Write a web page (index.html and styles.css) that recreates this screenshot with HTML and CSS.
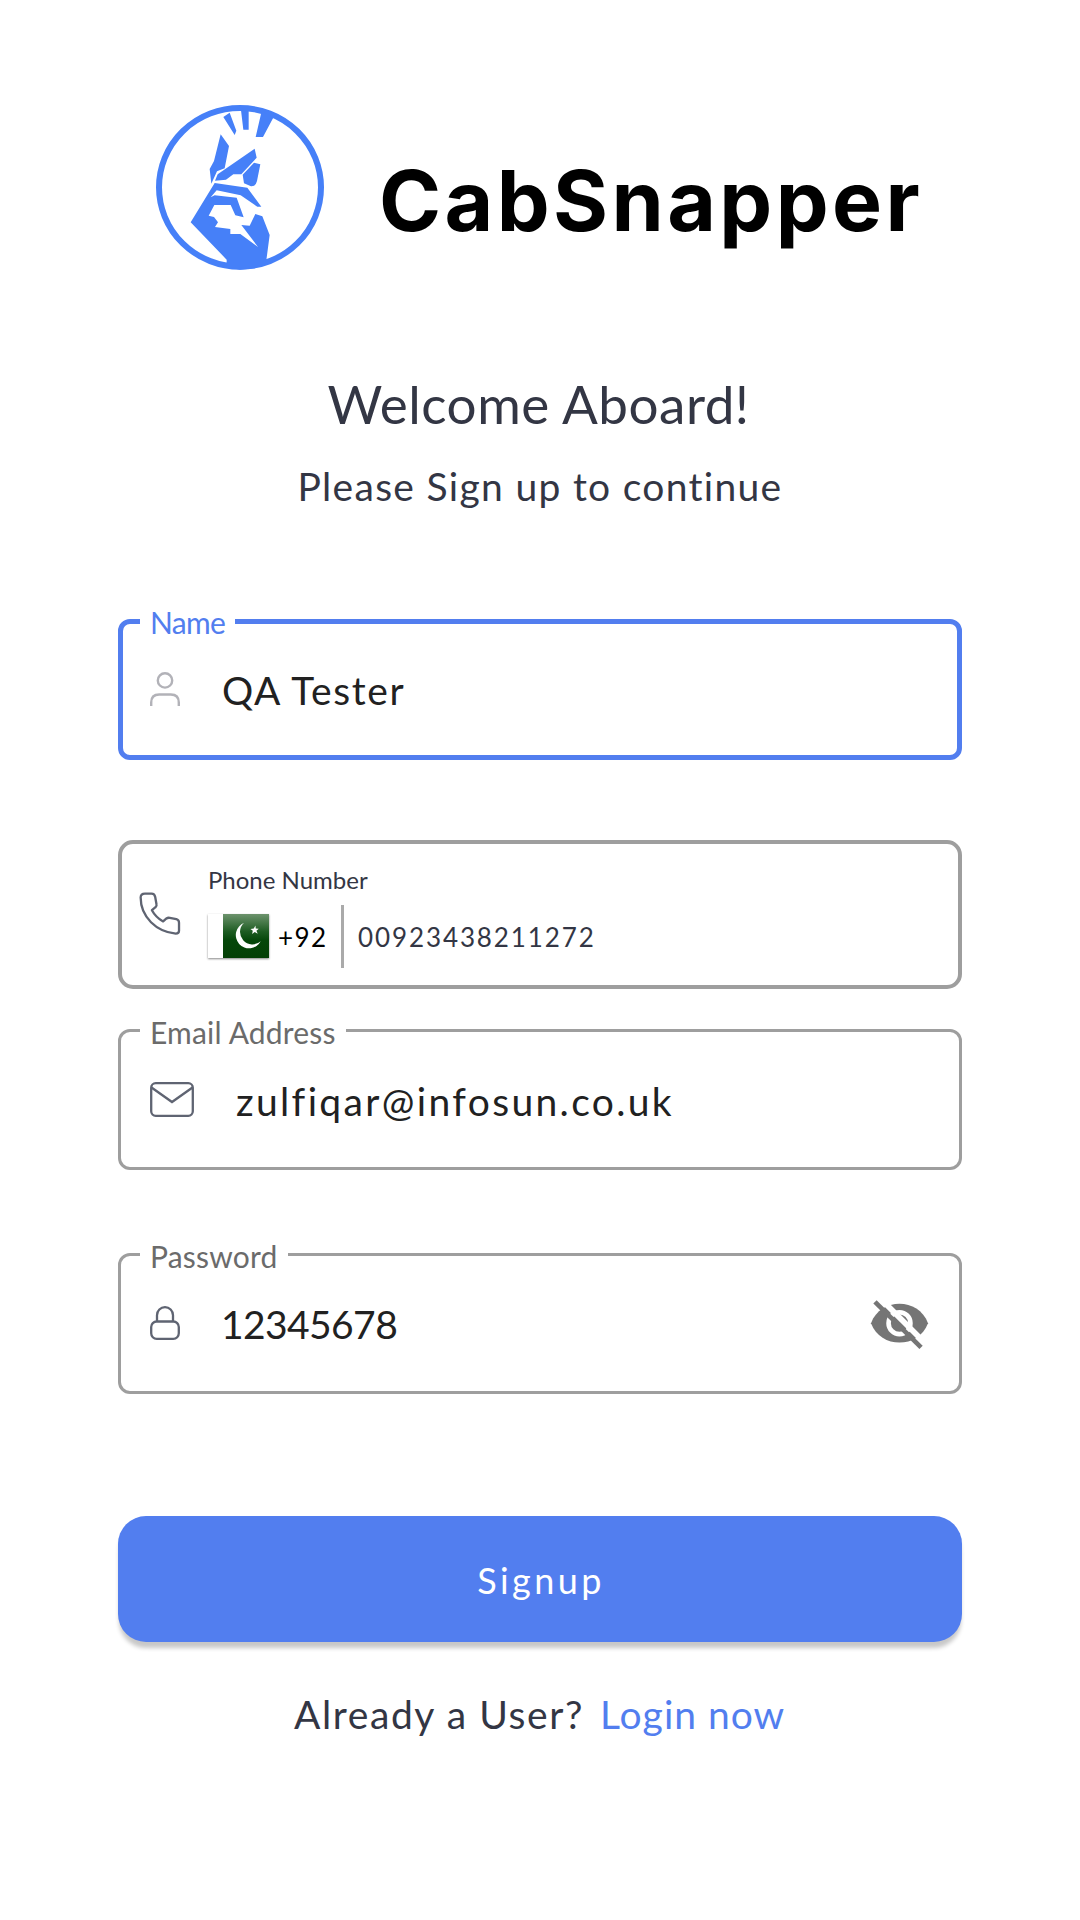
FILE: index.html
```html
<!DOCTYPE html>
<html lang="en">
<head>
<meta charset="utf-8">
<title>CabSnapper</title>
<link rel="stylesheet" href="styles.css">
</head>
<body>
<main class="screen">
  <header class="brand">
    <svg class="brand-mark" viewBox="0 0 570 555" fill="#4680f8">
      <ellipse cx="285" cy="277" rx="243" ry="238" fill="none" stroke="#4680f8" stroke-width="18"/>
      <path d="M235 66 254 53 274 107 269 120ZM288 46H311V104H295ZM350 48 386 66 354 126H332Z"/>
      <path d="M227 118 252 153 239 220 216 229 199 266 194 222 207 198ZM329 161 335 188 289 238H265L243 254 210 257 218 238ZM327 203 346 208 336 258Q332 275 318 274L297 265 293 239Z"/>
      <path d="M209 264 307 278 349 335H337L287 301 215 286 197 307 209 301 275 308 296 367 271 361 257 330H208L191 362 207 366 219 382 210 396 256 402V417H286L339 456 289 390 314 392 331 357 352 364 374 420 364 496 330 520 285 524 245 516V494L137 382Z"/>
    </svg>
    <span class="brand-name">CabSnapper</span>
  </header>

  <section class="intro">
    <h1 class="title">Welcome Aboard!</h1>
    <p class="subtitle">Please Sign up to continue</p>
  </section>

  <form class="form">
    <fieldset class="field field-name">
      <legend class="label label-name">Name</legend>
      <div class="row">
        <svg class="icon icon-user" viewBox="0 0 30 34" fill="none" stroke="#b2b2b8" stroke-width="2.4"><circle cx="15" cy="8.400" r="7.200"/><path d="M1.200 34v-3.500q0-8 8-8h11.600q8 0 8 8V34"/></svg>
        <span class="value value-name">QA Tester</span>
      </div>
    </fieldset>

    <div class="phone">
      <svg class="icon icon-phone" viewBox="88 186 125 130" fill="none" stroke="#5f6472" stroke-width="7" stroke-linejoin="round"><path d="M105 191H125Q134 191 136 201L140 224Q141 229 137 232L126 241Q138 263 160 275L170 266Q174 263 180 264L200 268Q208 270 208 279V303Q208 312 198 312C140 306 92 262 92 203Q92 191 105 191Z"/></svg>
      <div class="phone-body">
        <span class="phone-label">Phone Number</span>
        <div class="phone-line">
          <span class="flag">
            <svg class="flag-emblem" viewBox="338 252 139 132"><path d="M402 278A40 40 0 1 0 452 334A35 35 0 1 1 402 278Z" fill="#fff"/><path d="m436 286 1 9 9 1-7 6 4 9-9-5-8 6 2-10-7-5 10-2Z" fill="#fff"/></svg>
          </span>
          <span class="code">+92</span>
          <span class="divider"></span>
          <span class="number">00923438211272</span>
        </div>
      </div>
    </div>

    <fieldset class="field field-email">
      <legend class="label label-email">Email Address</legend>
      <div class="row">
        <svg class="icon icon-mail" viewBox="0 0 44 35" fill="none" stroke="#5f6472" stroke-width="2.3"><rect x="1.200" y="1.200" width="41.600" height="32.600" rx="4.500"/><path d="m1.500 5.500 20.500 14.500 20.500-14.500"/></svg>
        <span class="value value-email">zulfiqar@infosun.co.uk</span>
      </div>
    </fieldset>

    <fieldset class="field field-password">
      <legend class="label label-password">Password</legend>
      <div class="row">
        <svg class="icon icon-lock" viewBox="0 0 30 34" fill="none" stroke="#5f6472" stroke-width="2.3"><rect x="1.200" y="15.500" width="27.600" height="17.300" rx="5.500"/><path d="M7 15.500V9.200a8 8 0 0 1 16 0v6.300"/></svg>
        <span class="value value-password">12345678</span>
        <svg class="icon-eye" viewBox="90 175 178 155"><path d="M93 250C122 172 236 172 265 250C236 328 122 328 93 250Z" fill="#757575"/><circle cx="179" cy="250" r="33" fill="none" stroke="#fff" stroke-width="14"/><path d="m119 173 136 136" stroke="#fff" stroke-width="17"/><path d="m105 186 139 137" stroke="#757575" stroke-width="14"/></svg>
      </div>
    </fieldset>

    <button class="submit" type="button">Signup</button>
  </form>

  <p class="footer"><span class="question">Already a User?</span><a class="login">Login now</a></p>
</main>
</body>
</html>
```
FILE: styles.css
```css
* { box-sizing: border-box; }
body { margin: 0; background: #fff; font-family: Lato, "Open Sans", sans-serif; color: #333644; }
.screen { width: 1080px; height: 1920px; padding: 95px 118px 0; display: flex; flex-direction: column; }

.brand { height: 185px; padding-left: 27px; display: flex; gap: 44px; }
.brand-mark { width: 190px; height: 185px; }
.brand-name { font: 700 84px/100px Inter, sans-serif; letter-spacing: 3.4px; color: #000; padding-top: 56px; white-space: nowrap; }

.intro { padding-top: 93px; text-align: center; white-space: nowrap; }
.title { margin: 0; font-size: 53px; line-height: 62px; font-weight: 400; letter-spacing: 0.5px; margin-left: -3px; }
.subtitle { margin: 20px 0 0; font-size: 39px; line-height: 62px; letter-spacing: 1.3px; }

.form { padding-top: 84px; display: flex; flex-direction: column; }
.field { margin: 0; min-width: 0; padding: 0 30px 0 27px; border: 3px solid #9e9e9e; border-radius: 12px; height: 160px; }
.field-name { border: 5px solid #527eef; height: 159px; padding-left: 25px; }
.field-email { margin-top: 21px; }
.field-password { margin-top: 64px; }
.label { height: 41px; line-height: 44px; font-size: 30px; padding: 0 0 0 10px; margin-left: -8px; color: #6b6b6b; white-space: nowrap; }
.label-name { width: 95px; color: #527eef; line-height: 43px; letter-spacing: -0.7px; }
.label-email { width: 206px; letter-spacing: 0.2px; }
.label-password { width: 148px; letter-spacing: 0.2px; }
.row { height: 97px; display: flex; align-items: center; }
.field-name .row { height: 95px; }
.field-email .row { height: 99px; }
.icon { flex: none; }
.icon-user, .icon-lock { width: 30px; height: 34px; margin: 0 0 2px 2px; }
.icon-mail { width: 44px; height: 35px; margin: 0 0 2px 2px; }
.value { flex: 1; font-size: 39px; line-height: 48px; color: #212121; padding-left: 41px; white-space: nowrap; }
.value-name { padding-left: 42px; letter-spacing: 1.6px; }
.value-email { padding-left: 42px; letter-spacing: 2.35px; }
.value-password { letter-spacing: -0.6px; }
.icon-eye { width: 59px; height: 52px; flex: none; }

.phone { margin-top: 80px; height: 149px; border: 4px solid #9e9e9e; border-radius: 15px; padding: 22px 0 0 17px; display: flex; gap: 27px; }
.icon-phone { width: 42px; height: 43px; margin-top: 26px; }
.phone-body { display: flex; flex-direction: column; }
.phone-label { font-size: 24px; line-height: 28px; margin-bottom: 2px; }
.phone-line { display: flex; align-items: center; height: 63px; margin-top: 9px; }
.flag { width: 61px; height: 44px; margin-bottom: 2px; background: linear-gradient(90deg, #fff 15px, transparent 15px), linear-gradient(#6d936d, #1d5c22 40%, #05470a 60%, #044006); box-shadow: 0 1px 2px #888; display: flex; justify-content: flex-end; }
.flag-emblem { width: 46px; height: 44px; }
.code { width: 72px; padding-left: 9px; font-size: 26px; letter-spacing: 1.4px; color: #000; }
.divider { width: 3px; height: 63px; background: #aaa; }
.number { padding-left: 14px; font-size: 26px; letter-spacing: 1.9px; }

.submit { margin-top: 122px; height: 126px; border: 0; border-radius: 28px; padding: 1px 0 0 2px; background: #527eef; color: #fff; font-family: inherit; font-size: 36px; letter-spacing: 3.4px; box-shadow: 0 7px 4px -1px #c8c8c8; }

.footer { margin: 49px 0 0; display: flex; font-size: 39px; line-height: 46px; white-space: nowrap; padding-left: 176px; }
.question { width: 306px; letter-spacing: 1.6px; }
.login { color: #527eef; letter-spacing: 1px; }
```
